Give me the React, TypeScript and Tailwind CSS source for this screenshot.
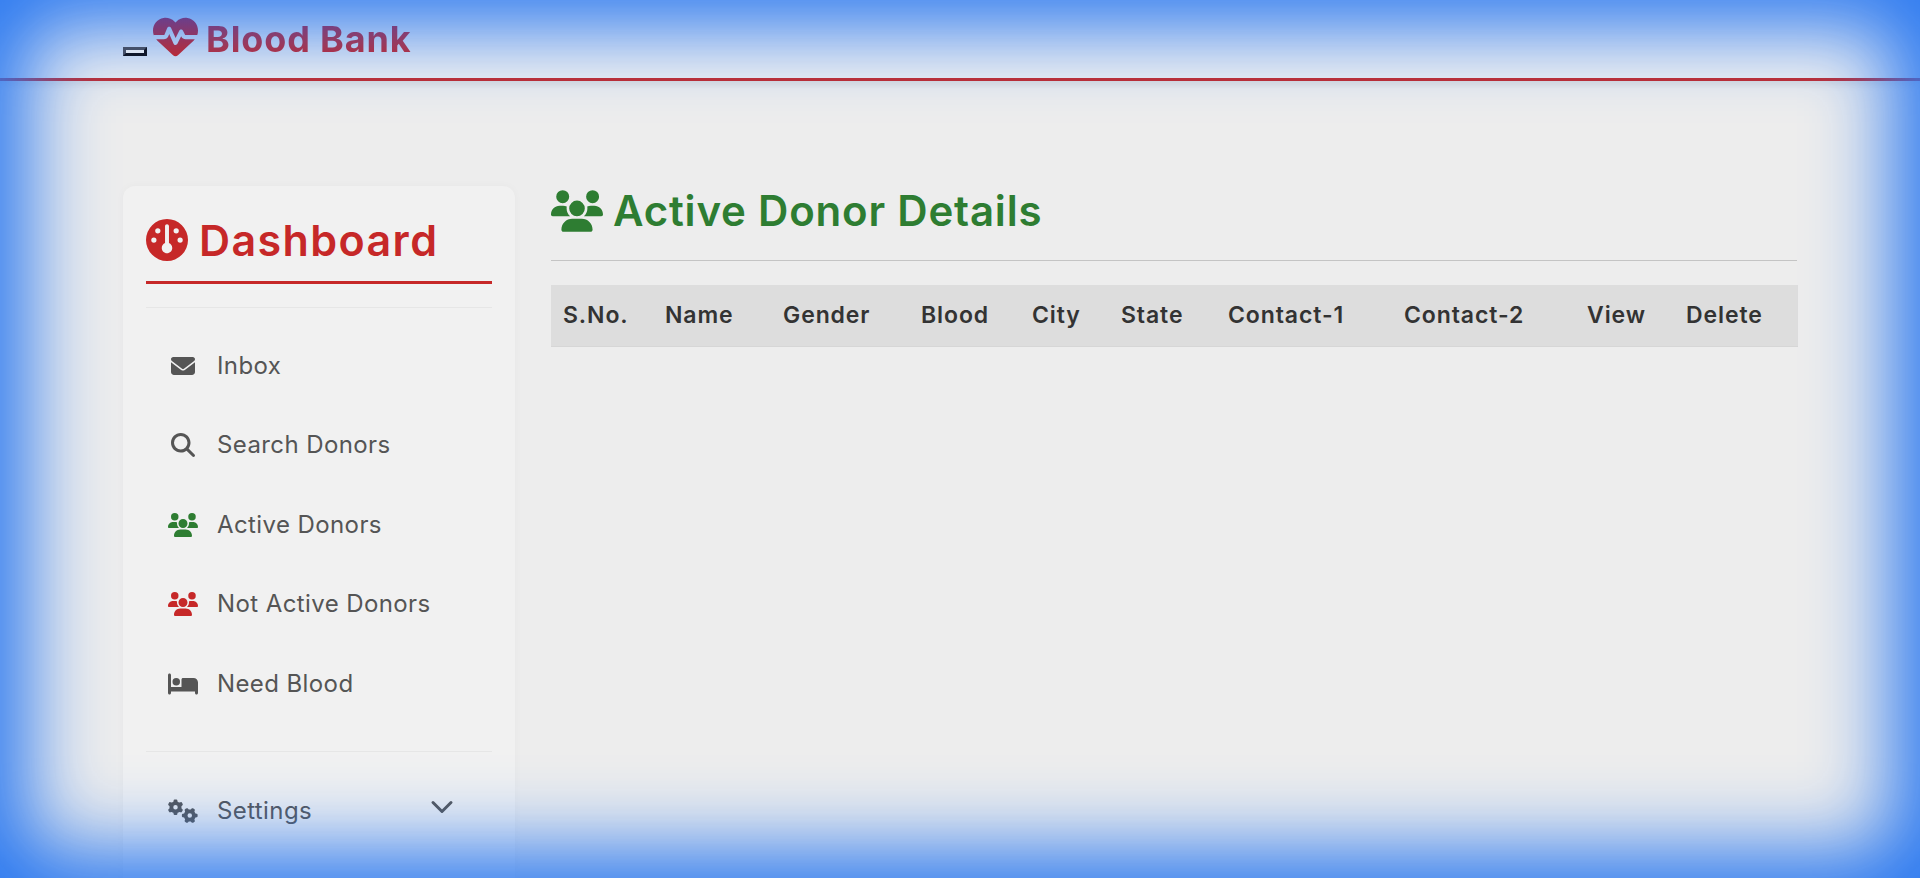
import React from 'react';
import { ChevronDown } from 'lucide-react';
import {
  FaBed,
  FaEnvelope,
  FaGauge,
  FaGears,
  FaMagnifyingGlass,
  FaUsers,
} from 'react-icons/fa6';

const navItems = [
  { label: 'Inbox', icon: <FaEnvelope className="w-6 h-6 text-[#555555]" /> },
  { label: 'Search Donors', icon: <FaMagnifyingGlass className="w-6 h-6 text-[#555555]" /> },
  { label: 'Active Donors', icon: <FaUsers className="w-[30px] h-6 text-[#2e7d32]" /> },
  { label: 'Not Active Donors', icon: <FaUsers className="w-[30px] h-6 text-[#c62828]" /> },
  { label: 'Need Blood', icon: <FaBed className="w-[30px] h-6 text-[#555555]" /> },
];

const columns = [
  { label: 'S.No.', width: 'w-[102px]' },
  { label: 'Name', width: 'w-[118px]' },
  { label: 'Gender', width: 'w-[138px]' },
  { label: 'Blood', width: 'w-[111px]' },
  { label: 'City', width: 'w-[89px]' },
  { label: 'State', width: 'w-[107px]' },
  { label: 'Contact-1', width: 'w-[176px]' },
  { label: 'Contact-2', width: 'w-[183px]' },
  { label: 'View', width: 'w-[99px]' },
  { label: 'Delete', width: 'w-[124px]' },
];

function HeartLogo() {
  return (
    <svg viewBox="0 0 512 512" className="w-[45px] h-[45px] -translate-y-0.5">
      <defs>
        <linearGradient id="logoFill" x1="0" y1="0" x2="0" y2="1">
          <stop offset="0" stopColor="#6a3f8c" />
          <stop offset="1" stopColor="#b82c38" />
        </linearGradient>
      </defs>
      <path
        fill="url(#logoFill)"
        d="M228.3 469.1L47.6 300.4c-4.2-3.9-8.2-8.1-11.9-12.4h87c22.6 0 43-13.6 51.7-34.5l10.5-25.2 49.3 109.5c3.8 8.5 12.1 14 21.4 14.1s17.8-5 22-13.3L320 253.7l1.7 3.4c9.5 19 28.9 31 50.1 31H476.3c-3.7 4.3-7.7 8.5-11.9 12.4L283.7 469.1c-7.5 7-17.4 10.9-27.7 10.9s-20.2-3.9-27.7-10.9zM503.7 240h-132c-3 0-5.8-1.7-7.2-4.4l-23.2-46.3c-4.1-8.1-12.4-13.3-21.5-13.3s-17.4 5.1-21.5 13.3l-41.4 82.8L205.9 158.2c-3.9-8.7-12.7-14.3-22.2-14.1s-18.1 5.9-21.8 14.8l-31.8 76.3c-1.2 3-4.2 4.9-7.4 4.9H16c-2.6 0-5 .4-7.3 1.1C3 225.2 0 208.2 0 190.9v-5.8c0-69.9 50.5-129.5 119.4-141C165 36.5 211.4 51.4 244 84l12 12 12-12c32.6-32.6 79-47.5 124.6-39.9C461.5 55.6 512 115.2 512 185.1v5.8c0 16.9-2.8 33.5-8.3 49.1z"
      />
    </svg>
  );
}

function Sidebar() {
  return (
    <aside className="w-[392px] shrink-0 mt-[105px] h-[760px] rounded-t-xl bg-[#f1f1f1] px-[23px] pt-[29px] shadow-[0_0_8px_rgba(0,0,0,0.03)]">
      <div className="flex items-center gap-[11px] h-[50px]">
        <FaGauge className="w-[42px] h-[42px] text-[#c62828]" />
        <h2 className="text-[43px] leading-none font-semibold text-[#c62828] tracking-[1.4px]">Dashboard</h2>
      </div>
      <div className="mt-[16px] h-[3px] bg-[#c62828]" />
      <div className="mt-[23px] h-px bg-[#e6e6e6]" />

      <ul className="pt-[18px] pb-[27px]">
        {navItems.map((item) => (
          <li key={item.label} className="flex items-center h-[79.5px] pl-[22px]">
            <span className="w-[49px] shrink-0">
              <span className="w-[30px] flex justify-center">{item.icon}</span>
            </span>
            <span className="text-[24px] tracking-[0.4px] text-[#555555]">{item.label}</span>
          </li>
        ))}
      </ul>

      <div className="h-px bg-[#e6e6e6]" />

      <div className="relative flex items-center h-[118px] pl-[22px]">
        <FaGears className="w-[30px] h-6 text-[#555555] mr-[19px]" />
        <span className="text-[24px] tracking-[0.4px] text-[#555555]">Settings</span>
        <ChevronDown className="absolute left-[278px] top-[37px] w-9 h-9 text-[#555555]" strokeWidth={2} />
      </div>
    </aside>
  );
}

function DonorTable() {
  return (
    <table className="w-full table-fixed mt-6 border-b border-[#d6d6d6]">
      <thead>
        <tr className="bg-[#dddddd] h-[61px]">
          {columns.map((col) => (
            <th key={col.label} className={`${col.width} pl-3 text-left text-[23px] tracking-[0.9px] font-semibold text-[#333333]`}>
              {col.label}
            </th>
          ))}
        </tr>
      </thead>
    </table>
  );
}

export default function App() {
  return (
    <div className="relative h-screen overflow-hidden bg-[#ededed] font-['Inter',sans-serif]">
      <header className="h-[81px] bg-[#f1f1f1] border-b-[3px] border-[#c62828] shadow-[0_3px_8px_rgba(0,0,0,0.08)] pl-[123px] flex items-start">
        <div className="relative z-10 mt-[47px] w-6 h-[9px] border-[3px] border-t-[#44506a] border-l-[#44506a] border-b-[#0f172a] border-r-[#0f172a] bg-[#dbe4f2]" />
        <div className="relative z-10 ml-[6px] mt-[16px] flex items-center gap-2">
          <HeartLogo />
          <span className="text-[36px] leading-none font-bold tracking-[0.85px] bg-gradient-to-b from-[#6f3f88] to-[#b02c40] bg-clip-text text-transparent">
            Blood Bank
          </span>
        </div>
      </header>

      <div className="flex gap-9 pl-[123px] pr-[123px]">
        <Sidebar />

        <main className="flex-1 min-w-0 pt-[104px]">
          <div className="flex items-center gap-[10px] h-[50px] translate-y-px">
            <FaUsers className="w-[52px] h-[42px] text-[#2e7d32]" />
            <h1 className="text-[42px] leading-none font-semibold text-[#2e7d32] tracking-[0.8px]">Active Donor Details</h1>
          </div>
          <hr className="mt-[25px] border-t border-[#c4c4c4]" />
          <DonorTable />
        </main>
      </div>

      <div className="pointer-events-none fixed inset-0 shadow-[inset_0_0_80px_28px_#2a78f0]" />
    </div>
  );
}
